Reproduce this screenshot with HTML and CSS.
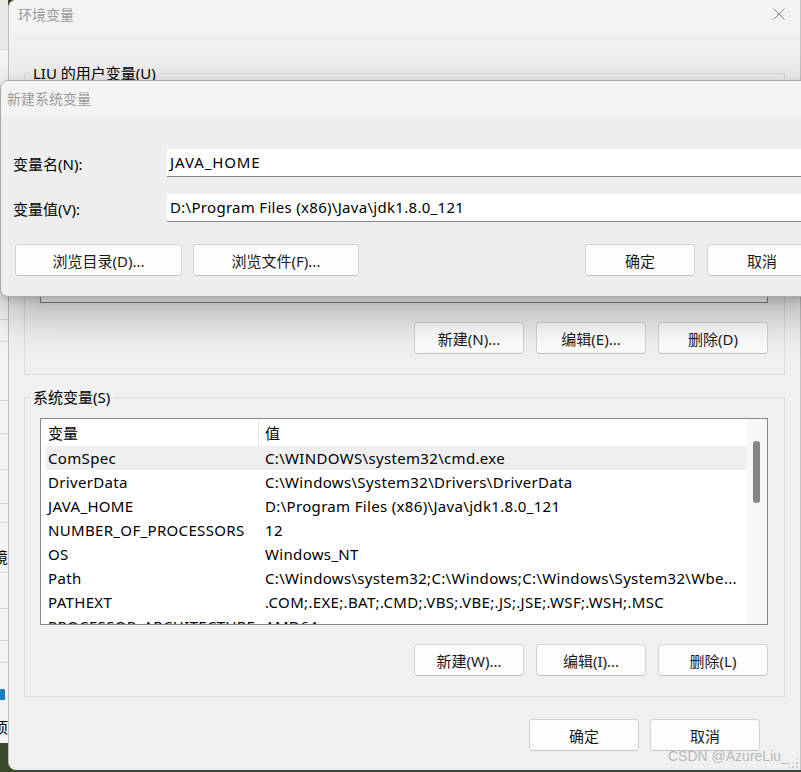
FILE: index.html
```html
<!DOCTYPE html>
<html lang="zh-CN">
<head>
<meta charset="utf-8">
<title>环境变量</title>
<link rel="stylesheet" href="styles.css">
</head>
<body>
<div class="desktop">
  <div class="bgwin">
    <div class="bgr h50 shade"></div>
    <div class="bgr h270"></div>
    <div class="bgr h22"></div>
    <div class="bgr h59"></div>
    <div class="bgr h33"></div>
    <div class="bgr h36"></div>
    <div class="bgr h34"></div>
    <div class="bgr h19"></div>
    <div class="bgr h50 glyph g1"><span>境</span></div>
    <div class="bgr h36"></div>
    <div class="bgr h32"></div>
    <div class="bgr h22"></div>
    <div class="bgr h37 nob sq"><i class="bluesq"></i></div>
    <div class="bgr h43 glyph g2 nob"><span>项</span></div>
  </div>

  <div class="dialog">
    <div class="titlebar">
      <span class="title">环境变量</span>
      <svg class="close" width="12" height="12" viewBox="0 0 12 12"><path d="M0.5 0.5 L11.5 11.5 M11.5 0.5 L0.5 11.5" stroke="#8a8a8a" stroke-width="1" fill="none"/></svg>
    </div>

    <fieldset class="group group-user">
      <legend>LIU 的用户变量(U)</legend>
      <div class="listbox list-user"></div>
      <div class="btnrow">
        <button class="btn">新建(N)...</button>
        <button class="btn">编辑(E)...</button>
        <button class="btn">删除(D)</button>
      </div>
    </fieldset>

    <fieldset class="group group-sys">
      <legend>系统变量(S)</legend>
      <div class="listbox list-sys">
        <div class="lv">
          <div class="lv-head"><div class="c1">变量</div><div class="c2 hdiv">值</div></div>
          <div class="lv-row sel"><div class="c1">ComSpec</div><div class="c2">C:\WINDOWS\system32\cmd.exe</div></div>
          <div class="lv-row"><div class="c1">DriverData</div><div class="c2">C:\Windows\System32\Drivers\DriverData</div></div>
          <div class="lv-row"><div class="c1">JAVA_HOME</div><div class="c2">D:\Program Files (x86)\Java\jdk1.8.0_121</div></div>
          <div class="lv-row"><div class="c1">NUMBER_OF_PROCESSORS</div><div class="c2">12</div></div>
          <div class="lv-row"><div class="c1">OS</div><div class="c2">Windows_NT</div></div>
          <div class="lv-row"><div class="c1">Path</div><div class="c2">C:\Windows\system32;C:\Windows;C:\Windows\System32\Wbe...</div></div>
          <div class="lv-row"><div class="c1">PATHEXT</div><div class="c2">.COM;.EXE;.BAT;.CMD;.VBS;.VBE;.JS;.JSE;.WSF;.WSH;.MSC</div></div>
          <div class="lv-row"><div class="c1">PROCESSOR_ARCHITECTURE</div><div class="c2">AMD64</div></div>
        </div>
        <div class="vscroll"><div class="thumb"></div></div>
      </div>
      <div class="btnrow">
        <button class="btn">新建(W)...</button>
        <button class="btn">编辑(I)...</button>
        <button class="btn">删除(L)</button>
      </div>
    </fieldset>

    <div class="footer">
      <button class="btn">确定</button>
      <button class="btn">取消</button>
    </div>
  </div>

  <div class="newvar">
    <div class="nv-title">新建系统变量</div>
    <div class="nv-body">
      <div class="nv-field">
        <label class="nv-label">变量名(N):</label>
        <div class="nv-input nv-name">JAVA_HOME</div>
      </div>
      <div class="nv-field">
        <label class="nv-label">变量值(V):</label>
        <div class="nv-input">D:\Program Files (x86)\Java\jdk1.8.0_121</div>
      </div>
      <div class="nv-buttons">
        <div class="nv-left">
          <button class="btn wide">浏览目录(D)...</button>
          <button class="btn wide2">浏览文件(F)...</button>
        </div>
        <div class="nv-right">
          <button class="btn">确定</button>
          <button class="btn">取消</button>
        </div>
      </div>
    </div>
  </div>

  <div class="watermark">CSDN @AzureLiu_</div>
  <div class="grip"></div>
</div>
</body>
</html>
```

FILE: styles.css
```css
* { box-sizing: border-box; }

html, body {
  margin: 0;
  padding: 0;
  background: #3b4a2c;
}

body {
  font-family: "Noto Sans", "Noto Sans CJK SC", sans-serif;
  font-size: 15px;
  color: #000;
}

.desktop {
  position: relative;
  width: 801px;
  height: 772px;
  overflow: hidden;
  display: flex;
  align-items: flex-start;
  background: #3b4a2c;
}

/* background window strip on the left */
.bgwin {
  width: 8px;
  flex: none;
  display: flex;
  flex-direction: column;
  background: #f4f4f4;
  overflow: hidden;
}
.bgr {
  border-bottom: 1px solid #d6d6d6;
  display: flex;
  align-items: center;
  justify-content: flex-end;
  overflow: hidden;
}
.bgr.nob { border-bottom: none; }
.bgr.shade { background: #e9e9e9; }
.bgr.g1 { padding-top: 20px; }
.bgr.g2 { padding-top: 11px; }
.bgr.sq { padding-top: 26px; }
.h19 { height: 19px; }
.h22 { height: 22px; }
.h32 { height: 32px; }
.h33 { height: 33px; }
.h34 { height: 34px; }
.h36 { height: 36px; }
.h37 { height: 37px; }
.h43 { height: 43px; }
.h50 { height: 50px; }
.h59 { height: 59px; }
.h270 { height: 270px; }
.glyph span {
  font-size: 15px;
  line-height: 15px;
  white-space: nowrap;
  flex: none;
}
.bluesq {
  display: block;
  width: 6px;
  height: 12px;
  background: #1f7fc4;
  border-radius: 1px;
  margin-right: 3px;
}

/* main dialog */
.dialog {
  width: 793px;
  height: 770px;
  flex: none;
  background: #f0f0f0;
  border-left: 1px solid #bdbdbd;
  border-right: 1px solid #c4c4c4;
  border-radius: 8px 0 0 8px;
  display: flex;
  flex-direction: column;
  overflow: hidden;
}

.titlebar {
  height: 33px;
  flex: none;
  background: #f3f3f3;
  display: flex;
  align-items: center;
  justify-content: space-between;
  padding: 0 15px 0 9px;
}
.title {
  font-size: 14px;
  color: #9b9b9b;
  margin-top: -5px;
}
.close { margin-top: -5px; }

.group {
  margin: 0 15px 0 15px;
  border: 1px solid #dcdcdc;
  padding: 11px 16px 20px 15px;
  min-inline-size: 0;
}
.group legend {
  font-size: 15px;
  line-height: 20px;
  height: 20px;
  padding: 0 3px;
  margin-left: -10px;
  color: #000;
}
.group-user { margin-top: 30px; }
.group-sys { margin-top: 12px; }

.listbox {
  border: 1px solid #828790;
  background: #fff;
}
.list-user { height: 209px; }
.list-sys {
  height: 207px;
  display: flex;
  overflow: hidden;
}

.lv {
  flex: 1;
  min-width: 0;
  padding-left: 5px;
  overflow: hidden;
}
.lv-head, .lv-row {
  display: flex;
  white-space: nowrap;
}
.lv-head { height: 27px; align-items: center; }
.lv-row { height: 24px; align-items: center; letter-spacing: 0.33px; }
.lv-row.sel { background: #efefef; }
.c1 {
  width: 212px;
  flex: none;
  padding-left: 2px;
  overflow: hidden;
}
.c2 {
  flex: 1;
  padding-left: 7px;
  overflow: hidden;
}
.hdiv {
  align-self: stretch;
  display: flex;
  align-items: center;
  border-left: 1px solid #e5e5e5;
  padding-left: 6px;
}

.vscroll {
  width: 20px;
  flex: none;
  background: #f7f7f7;
  padding: 22px 7px 0 6px;
}
.thumb {
  width: 7px;
  height: 62px;
  background: #858585;
  border-radius: 3px;
}

.btnrow {
  display: flex;
  justify-content: flex-end;
  gap: 12px;
  margin-top: 19px;
}

.btn {
  width: 110px;
  height: 32px;
  flex: none;
  font-family: "Noto Sans", "Noto Sans CJK SC", sans-serif;
  font-size: 15px;
  color: #1a1a1a;
  background: #fdfdfd;
  border: 1px solid #d3d3d3;
  border-bottom-color: #c2c2c2;
  border-radius: 4px;
  padding: 0;
}

.footer {
  display: flex;
  justify-content: flex-end;
  gap: 11px;
  margin-top: 22px;
  padding-right: 40px;
}

/* overlay dialog */
.newvar {
  position: absolute;
  left: 0;
  top: 80px;
  width: 832px;
  height: 217px;
  background: #eeeeee;
  border: 1px solid #a9a9a9;
  border-radius: 8px;
  box-shadow: 0 16px 44px rgba(0, 0, 0, 0.3), 0 3px 8px rgba(0, 0, 0, 0.14);
  display: flex;
  flex-direction: column;
  overflow: hidden;
}
.nv-title {
  height: 37px;
  flex: none;
  background: #f3f3f3;
  font-size: 14px;
  color: #9b9b9b;
  padding: 7px 0 0 6px;
}
.nv-body {
  padding: 31px 14px 0 12px;
  display: flex;
  flex-direction: column;
  gap: 17px;
}
.nv-field {
  display: flex;
  align-items: center;
  height: 28px;
}
.nv-label {
  width: 154px;
  flex: none;
}
.nv-input {
  flex: 1;
  height: 28px;
  background: #fff;
  border-bottom: 1px solid #868686;
  padding: 0 0 0 3px;
  line-height: 27px;
  white-space: nowrap;
  letter-spacing: 0.3px;
}
.nv-input.nv-name { letter-spacing: 0.9px; }
.nv-buttons {
  display: flex;
  justify-content: space-between;
  margin-top: 5px;
  padding-left: 2px;
}
.nv-left, .nv-right {
  display: flex;
  gap: 11px;
}
.nv-right { gap: 12px; }
.btn.wide { width: 167px; }
.btn.wide2 { width: 166px; }

.watermark {
  position: absolute;
  left: 668px;
  top: 748px;
  font-family: "Liberation Sans", sans-serif;
  font-size: 14px;
  color: #b8b8b8;
  white-space: nowrap;
}
.grip {
  position: absolute;
  right: 2px;
  bottom: 3px;
  width: 12px;
  height: 12px;
  background-image: radial-gradient(circle, #c8c8c8 1px, transparent 1.2px);
  background-size: 4px 4px;
  clip-path: polygon(100% 0, 100% 100%, 0 100%);
}
```
